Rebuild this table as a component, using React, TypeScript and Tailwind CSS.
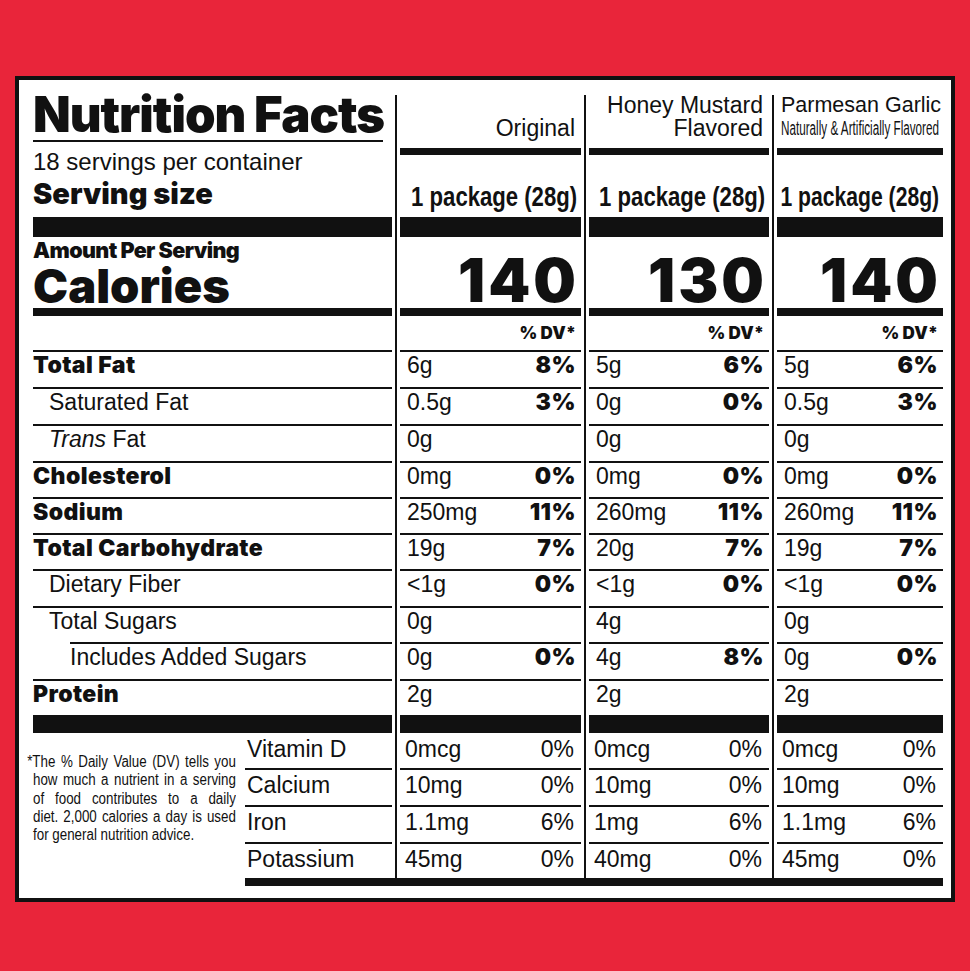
import React from "react";

const SANS = "font-['Liberation_Sans',Arial,sans-serif]";
const HEAVY = "font-['Inter','Liberation_Sans',sans-serif] font-black";

type Nutrient = {
  label: string;
  bold?: boolean;
  indent?: 0 | 1 | 2;
  italic?: string;
};

const nutrients: Nutrient[] = [
  { label: "Total Fat", bold: true },
  { label: "Saturated Fat", indent: 1 },
  { label: " Fat", italic: "Trans", indent: 1 },
  { label: "Cholesterol", bold: true },
  { label: "Sodium", bold: true },
  { label: "Total Carbohydrate", bold: true },
  { label: "Dietary Fiber", indent: 1 },
  { label: "Total Sugars", indent: 1 },
  { label: "Includes Added Sugars", indent: 2 },
  { label: "Protein", bold: true },
];

// row heights in px, line included
const rowHeights = [37, 37, 37, 36, 36, 36, 37, 36, 37, 36];
const vitHeights = [35, 37, 37, 36];
const vitamins = ["Vitamin D", "Calcium", "Iron", "Potassium"];

type Col = {
  key: string;
  width: string;
  serving: string;
  cal: string;
  rows: [string, string][];
  vit: [string, string][];
};

const cols: Col[] = [
  {
    key: "original",
    width: "w-[181px]",
    serving: "scale-x-[0.79]",
    cal: "140",
    rows: [
      ["6g", "8%"],
      ["0.5g", "3%"],
      ["0g", ""],
      ["0mg", "0%"],
      ["250mg", "11%"],
      ["19g", "7%"],
      ["<1g", "0%"],
      ["0g", ""],
      ["0g", "0%"],
      ["2g", ""],
    ],
    vit: [
      ["0mcg", "0%"],
      ["10mg", "0%"],
      ["1.1mg", "6%"],
      ["45mg", "0%"],
    ],
  },
  {
    key: "honey",
    width: "w-[180px]",
    serving: "scale-x-[0.79]",
    cal: "130",
    rows: [
      ["5g", "6%"],
      ["0g", "0%"],
      ["0g", ""],
      ["0mg", "0%"],
      ["260mg", "11%"],
      ["20g", "7%"],
      ["<1g", "0%"],
      ["4g", ""],
      ["4g", "8%"],
      ["2g", ""],
    ],
    vit: [
      ["0mcg", "0%"],
      ["10mg", "0%"],
      ["1mg", "6%"],
      ["40mg", "0%"],
    ],
  },
  {
    key: "parmesan",
    width: "w-[166px]",
    serving: "scale-x-[0.755]",
    cal: "140",
    rows: [
      ["5g", "6%"],
      ["0.5g", "3%"],
      ["0g", ""],
      ["0mg", "0%"],
      ["260mg", "11%"],
      ["19g", "7%"],
      ["<1g", "0%"],
      ["0g", ""],
      ["0g", "0%"],
      ["2g", ""],
    ],
    vit: [
      ["0mcg", "0%"],
      ["10mg", "0%"],
      ["1.1mg", "6%"],
      ["45mg", "0%"],
    ],
  },
];

const ColumnHeader: React.FC<{ colKey: string }> = ({ colKey }) => {
  if (colKey === "original") {
    return (
      <div className="flex h-[53px] flex-col items-end justify-end pb-[8px] pr-[6px] text-[23px] leading-[23px]">
        <span>Original</span>
      </div>
    );
  }
  if (colKey === "honey") {
    return (
      <div className="flex h-[53px] flex-col items-end justify-end pb-[8px] pr-[6px] text-[23px] leading-[23px]">
        <span className="whitespace-nowrap">Honey Mustard</span>
        <span>Flavored</span>
      </div>
    );
  }
  return (
    <div className="flex h-[53px] flex-col items-start justify-end pb-[8px] pl-[4px] leading-[23px]">
      <span className="whitespace-nowrap text-[21.5px]">Parmesan Garlic</span>
      <span className="inline-block shrink-0 origin-left scale-x-[0.6] whitespace-nowrap text-[19.5px]">
        Naturally &amp; Artificially Flavored
      </span>
    </div>
  );
};

const DataColumn: React.FC<{ col: Col }> = ({ col }) => (
  <div className="ml-[3px] flex border-l-2 border-[#111] pl-[3px]">
    <div className={`flex flex-col ${col.width}`}>
      <ColumnHeader colKey={col.key} />
      <div className="h-[7px] bg-[#111]" />
      <div className="flex h-[62px] justify-end pr-[4px] pt-[28px]">
        <span
          className={`inline-block shrink-0 origin-right whitespace-nowrap text-[28px] font-bold leading-none ${col.serving}`}
        >
          1 package (28g)
        </span>
      </div>
      <div className="h-[20px] bg-[#111]" />
      <div
        className={`h-[71px] pr-[2px] pt-[13px] text-right text-[60px] leading-none tracking-[3px] ${HEAVY}`}
      >
        {col.cal}
      </div>
      <div className="h-[8px] bg-[#111]" />
      <div className={`h-[34px] pr-[5px] pt-[9px] text-right text-[17px] leading-none ${HEAVY}`}>
        % DV*
      </div>
      {col.rows.map(([amt, pct], i) => (
        <div
          key={i}
          className={`flex justify-between border-t-2 border-[#111] pl-[7px] pr-[5px] pt-[2px] text-[23px] leading-none ${
            rowHeights[i] === 37 ? "h-[37px]" : "h-[36px]"
          }`}
        >
          <span>{amt}</span>
          <span className={`tracking-[0.5px] ${HEAVY}`}>{pct}</span>
        </div>
      ))}
      <div className="h-[18px] bg-[#111]" />
      {col.vit.map(([amt, pct], i) => (
        <div
          key={i}
          className={`flex justify-between pl-[5px] pr-[7px] text-[23px] leading-none ${
            i === 0 ? "pt-[5px]" : "border-t-2 border-[#111] pt-[4px]"
          } ${vitHeights[i] === 35 ? "h-[35px]" : vitHeights[i] === 37 ? "h-[37px]" : "h-[36px]"}`}
        >
          <span>{amt}</span>
          <span>{pct}</span>
        </div>
      ))}
    </div>
  </div>
);

const footnote = [
  "*The % Daily Value (DV) tells you",
  "how much a nutrient in a serving",
  "of food contributes to a daily",
  "diet. 2,000 calories a day is used",
];

const LeftColumn: React.FC = () => (
  <div className="flex w-[359px] flex-col">
    <div className="h-[45px]">
      <div className={`-mt-[5px] whitespace-nowrap text-[49px] leading-none tracking-[-1px] ${HEAVY}`}>
        Nutrition Facts
      </div>
    </div>
    <div className="h-[2px] w-[350px] bg-[#111]" />
    <div className="flex h-[75px] flex-col">
      <div className="mt-[8px] text-[24px] leading-none">18 servings per container</div>
      <div className={`mt-[5px] text-[29px] leading-none ${HEAVY}`}>Serving size</div>
    </div>
    <div className="h-[20px] bg-[#111]" />
    <div className="flex h-[71px] flex-col">
      <div className={`mt-[3px] text-[21.5px] leading-none tracking-[-0.6px] ${HEAVY}`}>
        Amount Per Serving
      </div>
      <div className={`text-[47px] leading-none ${HEAVY}`}>Calories</div>
    </div>
    <div className="h-[8px] bg-[#111]" />
    <div className="h-[34px]" />
    {nutrients.map((n, i) => (
      <div
        key={n.label}
        className={`border-t-2 border-[#111] pt-[2px] text-[23px] leading-none ${
          rowHeights[i] === 37 ? "h-[37px]" : "h-[36px]"
        } ${n.indent === 1 ? "pl-[16px]" : ""} ${n.indent === 2 ? "ml-[37px]" : ""} ${
          n.bold ? `tracking-[0.4px] ${HEAVY}` : ""
        }`}
      >
        {n.italic && <i>{n.italic}</i>}
        {n.label}
      </div>
    ))}
    <div className="h-[18px] bg-[#111]" />
    <div className="flex h-[145px]">
      <div className="w-[212px] shrink-0">
        <div className="w-[243px] origin-top-left scale-x-[0.835] pt-[20px] text-[16px] leading-[18.3px]">
          {footnote.map((line, i) => (
            <div
              key={line}
              className={`whitespace-nowrap text-justify [text-align-last:justify] ${
                i === 0 ? "-ml-[7px] w-[250px]" : "w-[243px]"
              }`}
            >
              {line}
            </div>
          ))}
          <div>for general nutrition advice.</div>
        </div>
      </div>
      <div className="flex flex-1 flex-col">
        {vitamins.map((v, i) => (
          <div
            key={v}
            className={`pl-[2px] text-[23px] leading-none ${
              i === 0 ? "pt-[5px]" : "border-t-2 border-[#111] pt-[4px]"
            } ${vitHeights[i] === 35 ? "h-[35px]" : vitHeights[i] === 37 ? "h-[37px]" : "h-[36px]"}`}
          >
            {v}
          </div>
        ))}
      </div>
    </div>
  </div>
);

export default function App() {
  return (
    <div
      className={`min-h-[971px] w-[970px] overflow-hidden bg-[#e9253a] pl-[15px] pt-[76px] text-[#111] ${SANS}`}
    >
      <div className="h-[826px] w-[940px] border-4 border-[#111] bg-white pl-[14px] pt-[15px]">
        <div className="flex">
          <LeftColumn />
          {cols.map((c) => (
            <DataColumn key={c.key} col={c} />
          ))}
        </div>
        <div className="ml-[212px] h-[8px] w-[698px] bg-[#111]" />
      </div>
    </div>
  );
}
